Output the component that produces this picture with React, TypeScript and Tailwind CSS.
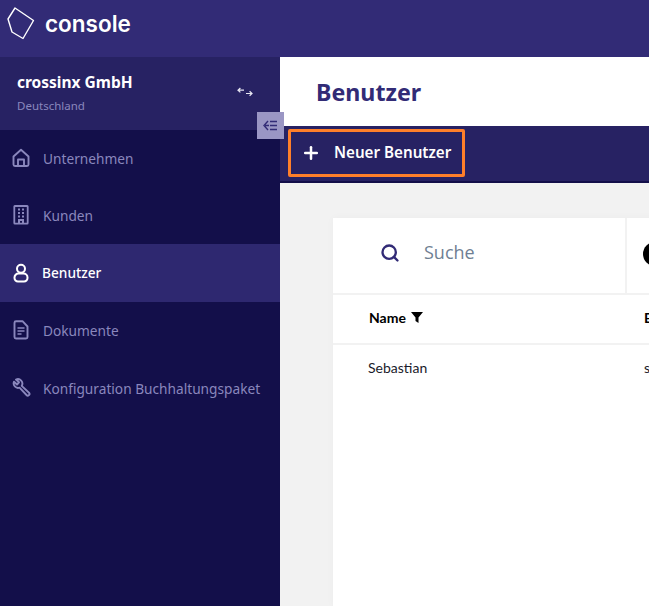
import React from 'react';
import { Plus, Search } from 'lucide-react';

const HomeIcon = () => (
  <svg width="20" height="20" viewBox="0 0 20 20" fill="none" stroke="currentColor" strokeWidth="1.9" strokeLinejoin="round">
    <path d="M2.500 8.500 10 1.800l7.500 6.700v8a1.500 1.500 0 0 1-1.500 1.500H4a1.500 1.500 0 0 1-1.500-1.500z" />
    <path d="M7 18v-6.500h6V18" />
  </svg>
);

const BuildingIcon = () => (
  <svg width="20" height="20" viewBox="0 0 20 20" fill="none" stroke="currentColor" strokeWidth="1.8">
    <rect x="3.300" y="1" width="13.400" height="17.600" rx="0.600" />
    <path d="M7 4.500h2M11 4.500h2M7 8h2M11 8h2M7 11.500h2M11 11.500h2M8 18.500v-3.500h4v3.500" strokeWidth="2" />
  </svg>
);

const UserIcon = () => (
  <svg width="20" height="20" viewBox="0 0 20 20" fill="none" stroke="currentColor" strokeWidth="2">
    <circle cx="10" cy="5.800" r="4" />
    <path d="M7.500 10.500h5a4 4 0 0 1 4 4v.5a3.500 3.500 0 0 1-3.500 3.500H7A3.500 3.500 0 0 1 3.500 15v-.5a4 4 0 0 1 4-4z" />
  </svg>
);

const DocumentIcon = () => (
  <svg width="20" height="20" viewBox="0 0 20 20" fill="none" stroke="currentColor" strokeWidth="1.9" strokeLinejoin="round">
    <path d="M5 1.200h6.500L16.500 6.500V17a1.500 1.500 0 0 1-1.500 1.500H5A1.500 1.500 0 0 1 3.500 17V2.700A1.500 1.500 0 0 1 5 1.200z" />
    <path d="M6.500 8h7M6.500 11h7M6.500 14h4" strokeWidth="1.600" />
  </svg>
);

const WrenchIcon = () => (
  <svg width="20" height="20" viewBox="0 0 20 20" fill="none" stroke="currentColor" strokeWidth="1.900" strokeLinejoin="round" strokeLinecap="round">
    <path d="M5 1.500 8 4.300 6 6.500 3 3.700a4.500 4.500 0 0 0 5.500 6l7 7.300a1.600 1.600 0 0 0 2.500-2.300l-7.300-6.800A4.500 4.500 0 0 0 5 1.500z" />
  </svg>
);

const navItems = [
  { label: 'Unternehmen', icon: HomeIcon },
  { label: 'Kunden', icon: BuildingIcon },
  { label: 'Benutzer', icon: UserIcon, active: true },
  { label: 'Dokumente', icon: DocumentIcon },
  { label: 'Konfiguration Buchhaltungspaket', icon: WrenchIcon },
];

const Logo = () => (
  <svg width="28" height="33" viewBox="0 0 28 33" fill="none" stroke="white" strokeWidth="1.400" strokeLinejoin="round">
    <path d="M8 1 L26.500 13.500 L16 31.500 L5 25 L1 12 Z" />
  </svg>
);

export default function App() {
  return (
    <div className="flex h-[606px] w-[649px] flex-col overflow-hidden bg-white font-['Noto_Sans',sans-serif]">
      {/* Top bar */}
      <header className="flex h-[57px] shrink-0 items-center bg-[#322b76] pb-[11px] pl-[7px]">
        <Logo />
        <span className="mt-[2px] ml-[10px] font-['Inter',sans-serif] text-[22.5px] font-semibold text-white">console</span>
      </header>

      <div className="flex min-h-0 flex-1">
        {/* Sidebar */}
        <aside className="flex w-[280px] shrink-0 flex-col bg-[#130f4a]">
          <div className="flex h-[73px] shrink-0 items-center justify-between bg-[#272263] pb-[1px] pl-[17px] pr-[27px]">
            <div>
              <div className="text-[15.500px] leading-[20px] font-bold text-white">crossinx GmbH</div>
              <div className="mt-[6px] text-[11.500px] leading-[16px] text-[#8a87bd]">Deutschland</div>
            </div>
            <svg className="-mt-[2px]" width="16" height="10" viewBox="0 0 16 10" fill="none" stroke="#e8e7f2" strokeWidth="1.200">
              <path d="M1 3.200h6M3.400 1 1 3.200l2.400 2.200M15 6.500H9M12.600 4.300 15 6.500l-2.400 2.200" />
            </svg>
          </div>
          <nav className="-mt-[1px] flex flex-col">
            {navItems.map((item) => {
              const Icon = item.icon;
              return (
                <div
                  key={item.label}
                  className={`flex h-[57.5px] shrink-0 items-center gap-[12px] pl-[11px] text-[13.7px] ${
                    item.active ? 'bg-[#2e2870] font-medium text-white' : 'text-[#8a87bd]'
                  }`}
                >
                  <Icon />
                  <span className={item.active ? '-ml-[1px] pt-[2px]' : 'pt-[3px]'}>{item.label}</span>
                </div>
              );
            })}
          </nav>
        </aside>

        {/* Main */}
        <main className="relative flex min-w-0 flex-1 flex-col bg-[#f2f2f2]">
          <button className="absolute top-[55px] left-[-23px] flex h-[27px] w-[27px] items-center justify-center bg-[#9a96c4]">
            <svg width="15" height="11" viewBox="0 0 15 11" fill="none" stroke="#322b76" strokeWidth="1.400">
              <path d="M5 1 1 5.500 5 10M2 5.500h4M7 1.500h7M7 5.500h7M7 9.500h7" />
            </svg>
          </button>
          <div className="flex h-[69px] shrink-0 items-center bg-white pl-[36px]">
            <h1 className="mt-[2px] text-[23.2px] font-bold text-[#322b76]">Benutzer</h1>
          </div>
          <div className="flex h-[57px] shrink-0 items-center border-b-2 border-[#130f4a] bg-[#272263] pb-[2px] pl-[8px]">
            <div className="flex h-[48px] w-[177px] items-center rounded-[2px] border-[3px] border-[#ff7f2a] pl-[10px] text-white">
              <Plus size={20} strokeWidth={3} />
              <span className="ml-[13px] text-[15.2px] font-semibold">Neuer Benutzer</span>
            </div>
          </div>
          <div className="min-h-0 flex-1 pt-[35px] pl-[53px]">
            <div className="h-full w-[900px] bg-white font-['Lato',sans-serif] shadow-[0_0_8px_rgba(0,0,0,0.03)]">
              <div className="flex h-[77px] border-b-2 border-[#f2f2f2]">
                <div className="flex w-[294px] shrink-0 items-center border-r-2 border-[#f2f2f2] pb-[6px] pl-[47px]">
                  <Search size={20} strokeWidth={2.800} className="text-[#322b76]" />
                  <span className="ml-[24px] font-['Open_Sans',sans-serif] text-[18px] text-[#6f7f93]">Suche</span>
                </div>
                <div className="flex flex-1 items-center pb-[4px] pl-[16px]">
                  <div className="h-[24px] w-[24px] rounded-full bg-black" />
                </div>
              </div>
              <div className="flex h-[50px] items-center border-b-2 border-[#f2f2f2] pb-[4px] text-[14px] font-bold text-black">
                <div className="flex w-[311px] shrink-0 items-center pl-[36px]">
                  Name
                  <svg className="ml-[5px]" width="12" height="11" viewBox="0 0 12 11" fill="black">
                    <path d="M0 0h12L7.500 5.500V11L4.500 9V5.500z" />
                  </svg>
                </div>
                <div>E-Mail</div>
              </div>
              <div className="flex h-[48px] items-center pb-[4px] text-[14px] text-[#1a1a2a]">
                <div className="w-[311px] shrink-0 pl-[35px]">Sebastian</div>
                <div>sebastian@crossinx.com</div>
              </div>
            </div>
          </div>
        </main>
      </div>
    </div>
  );
}
